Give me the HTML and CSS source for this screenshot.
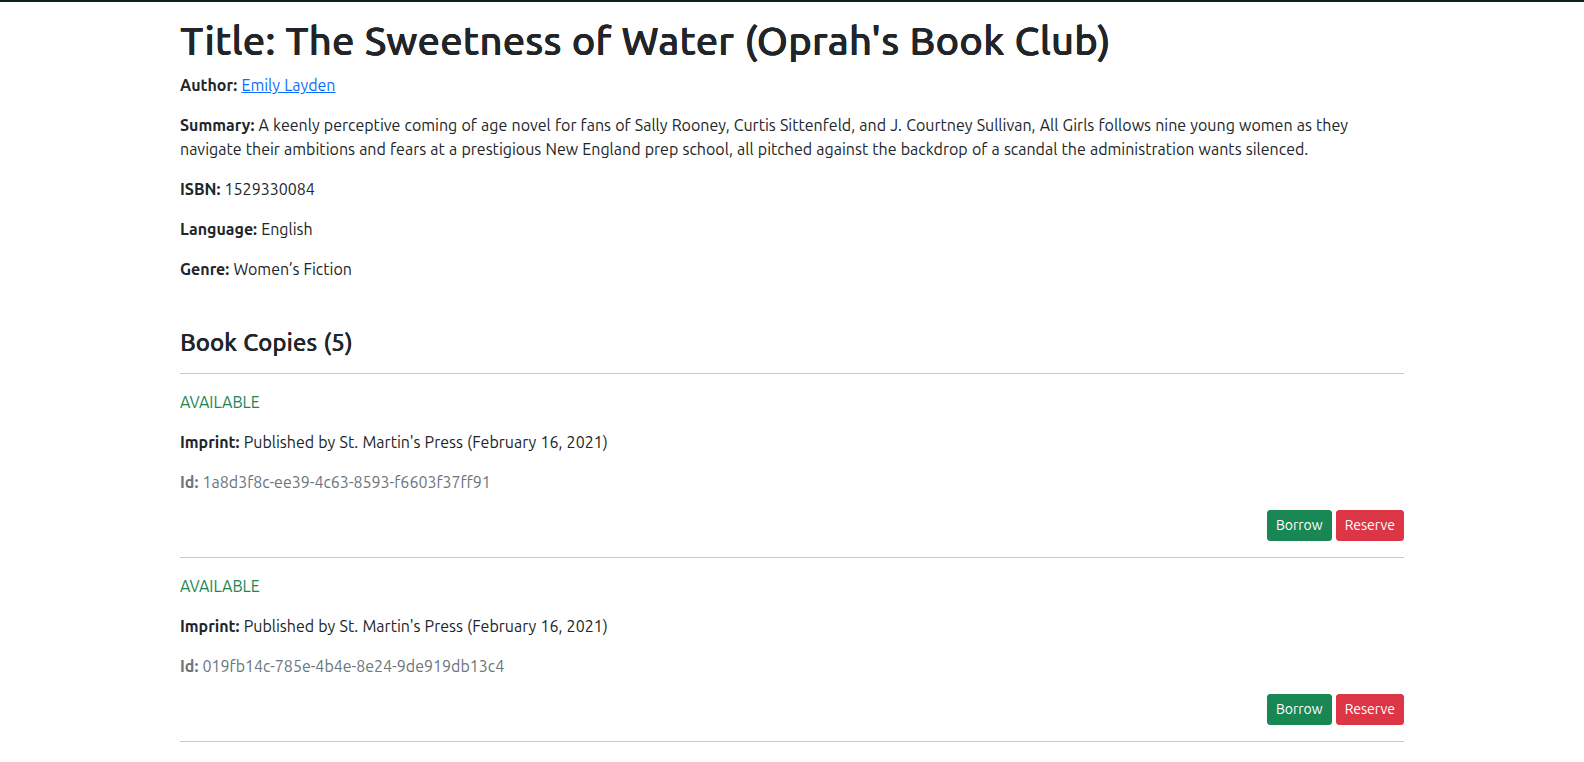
FILE: index.html
```html
<!DOCTYPE html>
<html lang="en">
<head>
<meta charset="utf-8">
<title>The Sweetness of Water</title>
<link rel="stylesheet" href="styles.css">
</head>
<body>
<div class="topbar"></div>
<main class="container">
  <h1 class="title">Title: The Sweetness of Water (Oprah's Book Club)</h1>
  <p><b>Author:</b> <a href="#" class="link">Emily Layden</a></p>
  <p><b>Summary:</b> A keenly perceptive coming of age novel for fans of Sally Rooney, Curtis Sittenfeld, and J. Courtney Sullivan, All Girls follows nine young women as they navigate their ambitions and fears at a prestigious New England prep school, all pitched against the backdrop of a scandal the administration wants silenced.</p>
  <p><b>ISBN:</b> 1529330084</p>
  <p><b>Language:</b> English</p>
  <p><b>Genre:</b> Women’s Fiction</p>

  <section class="copies">
    <h4 class="copies-title">Book Copies (5)</h4>
    <hr class="rule">
    <div class="copy">
      <p class="status">AVAILABLE</p>
      <p><b>Imprint:</b> Published by St. Martin's Press (February 16, 2021)</p>
      <p class="muted"><b>Id:</b> 1a8d3f8c-ee39-4c63-8593-f6603f37ff91</p>
      <div class="actions">
        <button class="btn btn-success">Borrow</button>
        <button class="btn btn-danger">Reserve</button>
      </div>
    </div>
    <hr class="rule">
    <div class="copy">
      <p class="status">AVAILABLE</p>
      <p><b>Imprint:</b> Published by St. Martin's Press (February 16, 2021)</p>
      <p class="muted"><b>Id:</b> 019fb14c-785e-4b4e-8e24-9de919db13c4</p>
      <div class="actions">
        <button class="btn btn-success">Borrow</button>
        <button class="btn btn-danger">Reserve</button>
      </div>
    </div>
    <hr class="rule">
  </section>
</main>
</body>
</html>
```
FILE: styles.css
```css
* { box-sizing: border-box; }
html, body {
  margin: 0;
  padding: 0;
  background: #fff;
}
body {
  font-family: "Ubuntu", "Lato", "Liberation Sans", sans-serif;
  font-size: 16px;
  line-height: 24px;
  color: #212529;
  word-spacing: 0.5px;
}
.topbar {
  height: 2px;
  background: #0b2416;
}
.container {
  width: 1224px;
  margin: 0 auto;
  padding-top: 15px;
}
.title {
  font-size: 40px;
  line-height: 48px;
  font-weight: 500;
  letter-spacing: 0.18px;
  text-shadow: 0.5px 0 0 #212529, 0.25px 0 0 #212529;
  margin: 0 0 8px;
}
p {
  margin: 0 0 16px;
}
b {
  font-weight: 700;
}
.link {
  color: #0d6efd;
  text-decoration: underline;
}
.copies {
  margin-top: 47px;
}
.copies-title {
  font-size: 24px;
  line-height: 29px;
  font-weight: 500;
  letter-spacing: 0.05px;
  text-shadow: 0.4px 0 0 #212529;
  margin: 0 0 8px;
}
.rule {
  border: 0;
  border-top: 1px solid #c8c9ca;
  height: 0;
  margin: 16px 0;
}
.status {
  color: #198754;
}
.muted {
  color: #6c757d;
}
.actions {
  display: flex;
  justify-content: flex-end;
  gap: 4px;
}
.btn {
  font-family: inherit;
  font-size: 14px;
  line-height: 21px;
  padding: 4px 8px;
  border: 1px solid transparent;
  border-radius: 3px;
  color: #fff;
  cursor: pointer;
  word-spacing: normal;
}
.btn-success {
  background: #198754;
  border-color: #198754;
}
.btn-danger {
  background: #dc3545;
  border-color: #dc3545;
}
```
